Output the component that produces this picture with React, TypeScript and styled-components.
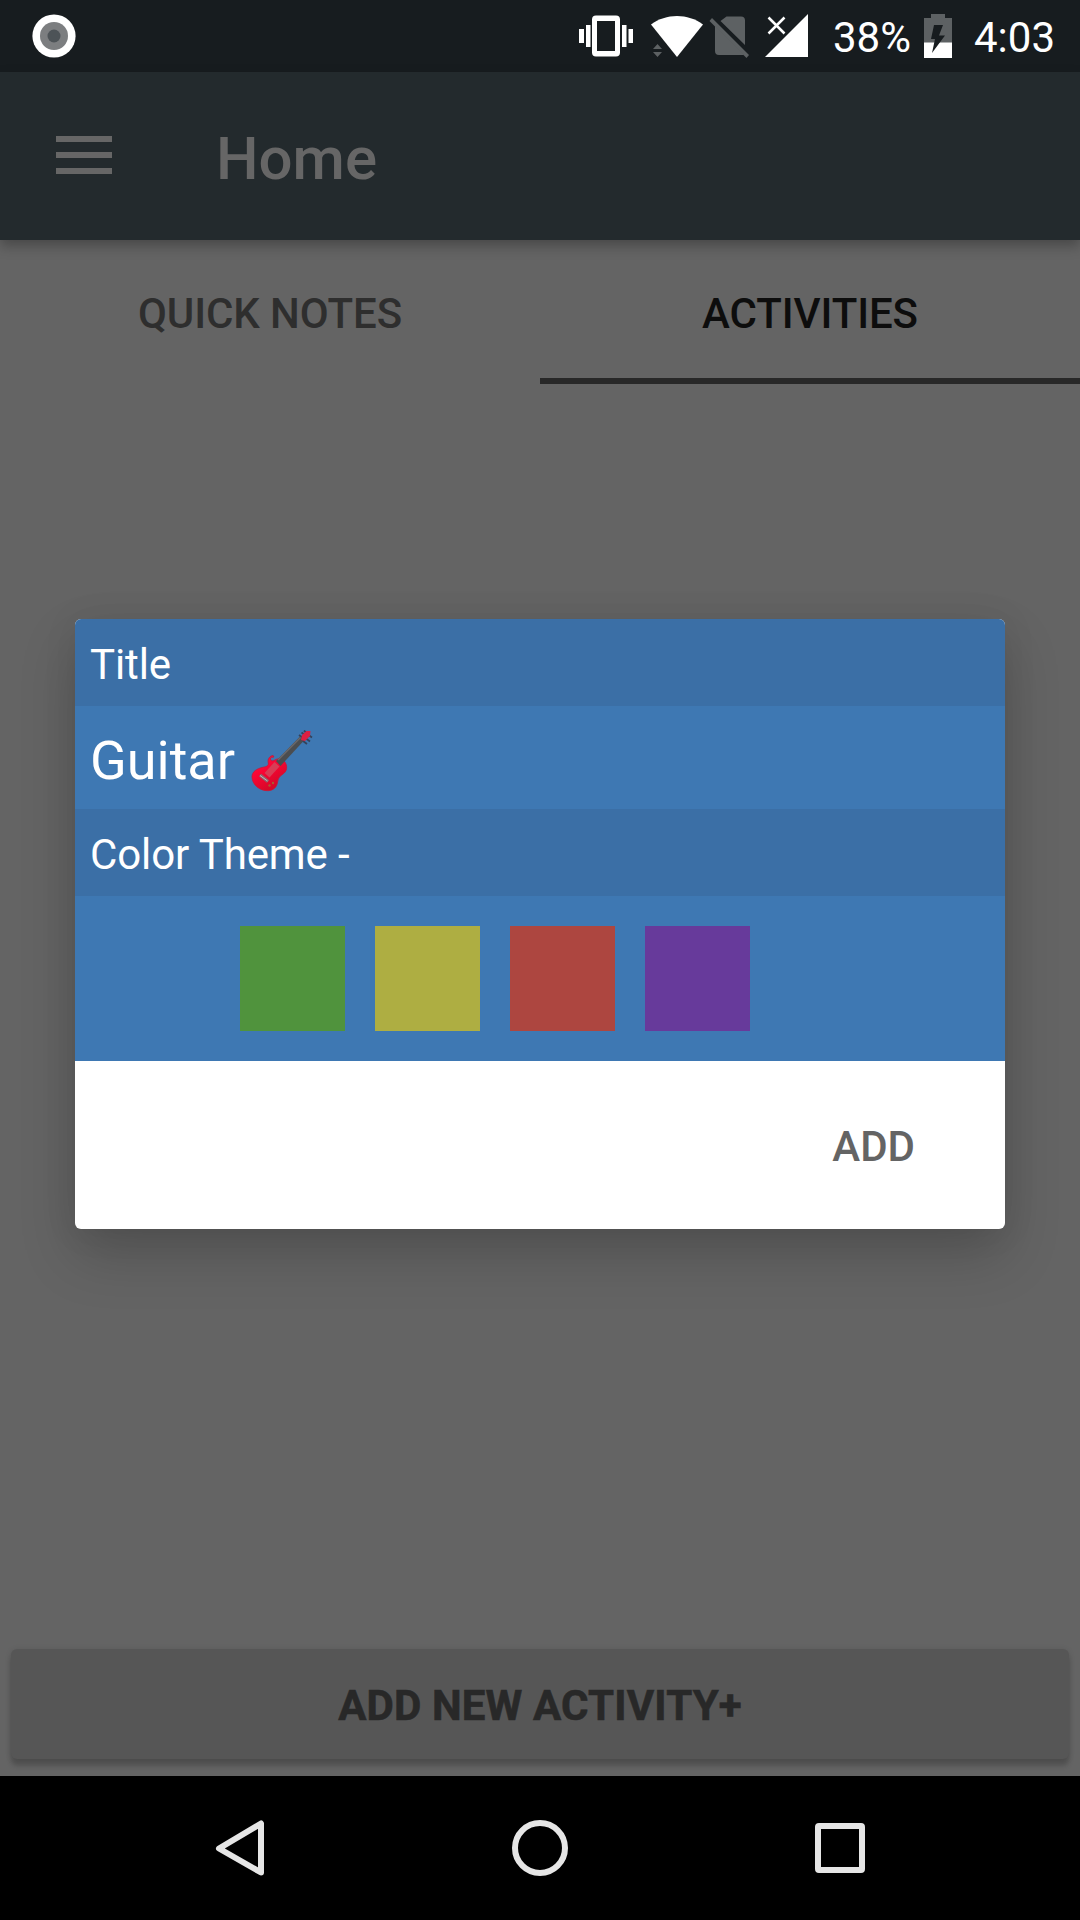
import React from "react";
import styled, { createGlobalStyle } from "styled-components";

const GlobalStyle = createGlobalStyle`
  * { box-sizing: border-box; }
  body { margin: 0; background: #646464; }
  button { border: 0; margin: 0; padding: 0; background: none; font: inherit; color: inherit; }
`;

const Screen = styled.div`
  position: relative;
  display: flex;
  flex-direction: column;
  width: 1080px;
  height: 1920px;
  overflow: hidden;
  background: #646464;
  font-family: Roboto, "Liberation Sans", sans-serif;
`;

const StatusBar = styled.header`
  display: flex;
  align-items: center;
  justify-content: space-between;
  height: 72px;
  padding: 0 25px 0 32px;
  background: #171c1f;
  color: #fff;
  font-size: 42px;
  line-height: 72px;
  z-index: 1;
`;

const StatusGroup = styled.div`
  display: flex;
  align-items: center;
`;

const Battery = styled.svg`
  display: block;
  margin: 0 22px 0 13px;
`;

const StatusText = styled.span`
  display: block;
  padding-top: 3px;
`;

const BatteryLevel = styled(StatusText)`
  margin-left: 23px;
`;

const AppBar = styled.div`
  display: flex;
  align-items: center;
  flex: none;
  height: 168px;
  padding-left: 56px;
  background: #232a2d;
  box-shadow: 0 6px 12px rgba(0, 0, 0, 0.28);
  z-index: 1;
`;

const MenuButton = styled.button`
  display: flex;
  flex-direction: column;
  gap: 10px;
  width: 56px;
  margin-bottom: 2px;
`;

const MenuLine = styled.span`
  height: 6px;
  background: #666;
`;

const PageTitle = styled.h1`
  margin: 6px 0 0 104px;
  color: #666;
  font-size: 60px;
  font-weight: 500;
  line-height: 72px;
`;

const Tabs = styled.nav`
  display: flex;
  flex: none;
  height: 144px;
`;

const Tab = styled.button<{ $active?: boolean }>`
  flex: 1;
  padding-top: 10px;
  border-bottom: 6px solid ${(p) => (p.$active ? "#282828" : "transparent")};
  color: ${(p) => (p.$active ? "#0d0d0d" : "#2e2e2e")};
  font-size: 42px;
  font-weight: 500;
  line-height: 48px;
  letter-spacing: -0.1px;
`;

const Content = styled.main`
  display: flex;
  flex: 1;
  flex-direction: column;
  justify-content: flex-end;
  padding: 0 11px 17px;
`;

const AddActivity = styled.button`
  height: 110px;
  padding-top: 3px;
  border-radius: 6px;
  background: #565656;
  box-shadow: 0 7px 5px rgba(0, 0, 0, 0.18), 0 1px 6px rgba(0, 0, 0, 0.12);
  color: #282828;
  font-size: 42px;
  font-weight: 700;
  letter-spacing: 0.15px;
  -webkit-text-stroke: 0.6px #282828;
`;

const NavBar = styled.footer`
  display: flex;
  align-items: center;
  justify-content: center;
  gap: 180px;
  flex: none;
  height: 144px;
  background: #000;
`;

const NavIcon = styled.svg`
  display: block;
  width: 120px;
  height: 80px;
  fill: none;
  stroke: #e6e6e6;
  stroke-width: 6;
  stroke-linejoin: round;
`;

const Dialog = styled.section`
  position: absolute;
  top: 619px;
  left: 75px;
  width: 930px;
  height: 610px;
  overflow: hidden;
  border-radius: 6px;
  background: #fff;
  box-shadow: 0 26px 56px rgba(0, 0, 0, 0.19), 0 2px 36px rgba(0, 0, 0, 0.07);
  color: #fff;
  z-index: 2;
`;

const Label = styled.div`
  height: 87px;
  padding: 4px 15px 0;
  background: #3b6fa6;
  font-size: 42px;
  line-height: 84px;
  letter-spacing: -0.1px;
`;

const TitleField = styled.div`
  display: flex;
  align-items: center;
  height: 103px;
  padding: 6px 15px 0;
  background: #3e78b3;
  font-size: 54px;
`;

const Guitar = styled.svg`
  display: block;
  width: 64px;
  height: 64px;
  margin: 2px 0 0 15px;
`;

const Palette = styled.div`
  display: flex;
  gap: 30px;
  height: 165px;
  padding: 30px;
  background: #3e78b3;
`;

const Swatch = styled.button<{ $color: string }>`
  width: 105px;
  height: 105px;
  background: ${(p) => p.$color};
`;

const Actions = styled.div`
  display: flex;
  align-items: center;
  justify-content: flex-end;
  height: 168px;
  padding: 2px 90px 0 0;
`;

const AddButton = styled.button`
  color: #646464;
  font-size: 42px;
  font-weight: 500;
`;

const swatches = ["#3e78b3", "#50933d", "#aeae42", "#ad4640", "#673a9b"];

const RecordIcon = () => (
  <svg width="44" height="44" viewBox="0 0 44 44">
    <circle cx="22" cy="22" r="21.6" fill="#fff" />
    <circle cx="22" cy="22" r="14" fill="#7c7e80" />
    <circle cx="22" cy="22" r="6.5" fill="#4d5357" />
  </svg>
);

const SignalIcons = () => (
  <svg width="240" height="72" viewBox="570 0 240 72">
    <g fill="#fff">
      <path d="M579 29h5v14h-5zM586 25h4.500v22h-4.500zM622 25h4.500v22h-4.500zM628.500 29h4.500v14h-4.500z" />
      <path fillRule="evenodd" d="M596 15.500h20a4 4 0 0 1 4 4v33a4 4 0 0 1-4 4h-20a4 4 0 0 1-4-4v-33a4 4 0 0 1 4-4zM597 21v30h18V21z" />
      <path d="M651 24.500C666 13 688 13 703 24.500L677 57z" />
      <path d="M808 14v43h-43z" />
    </g>
    <path d="M768.500 17.500l16 16m0-16l-16 16" stroke="#fff" strokeWidth="2.500" />
    <g fill="#5d6163">
      <path d="M653 49l4.500-5 4.500 5zM653 52h9l-4.500 5z" />
      <path d="M726.500 16.500H741a4 4 0 0 1 4 4V45L720.500 21zM715 25.500L744 54.500a4 4 0 0 1-3 .500h-22a4 4 0 0 1-4-4z" />
      <path d="M712 18l37 37-2.500 3L709.500 21z" />
    </g>
  </svg>
);

const BatteryIcon = () => (
  <Battery width="28" height="44" viewBox="0 0 28 44">
    <path d="M7 0h14v4h7v25H0V4h7z" fill="#5d6163" />
    <path d="M0 28.500h28V44H0z" fill="#fff" />
    <path d="M10 11h9l-4 10.500h6L8 39l3-14H7z" fill="#171c1f" />
  </Battery>
);

const GuitarIcon = () => (
  <Guitar viewBox="250 730 64 64">
    <defs>
      <linearGradient id="body" x1="0" y1="0" x2="0.600" y2="1">
        <stop offset="0" stopColor="#e9234d" />
        <stop offset="0.450" stopColor="#fb0535" />
        <stop offset="1" stopColor="#cf0926" />
      </linearGradient>
    </defs>
    <path d="M272.500 755.500c-3.500 1-5 4-4.200 7.500.5 2.500-1.300 3.500-5 4.200-6.500 1.300-11.300 4.500-11.300 9.500 0 8 8 14.300 16 14 6-.3 9-4 9.700-9 .5-4 2.300-5.700 6-8.200 4.500-3.500 3.600-10-.7-13.500-2-1.600-5.500-1.800-8.500.3-2 1.300-4.500.3-4-1.700.2-1.300 1.400-1.500 3-1.400.2-1.200 0-1.800-1-1.700z" fill="url(#body)" stroke="#c91635" strokeWidth="0.800" />
    <path d="M264.500 773l10-11 5 4.500-10 11z" fill="#d83d55" />
    <path d="M276 761l24-24.500 4 4L280.500 766z" fill="#4b4d50" />
    <path d="M278 760l23-23" stroke="#6a686b" strokeWidth="1.500" />
    <g stroke="#35435b" strokeWidth="1.800">
      <path d="M299 735l4 3M301.500 732.500l4 3M304 730.500l3 3M303 741l4 3M306 738.500l4 3M308.500 735l3.500 2.500" />
    </g>
    <path d="M301 740l1-5 4.500-4h4l-.5 5-5 5z" fill="#dc1f43" />
    <path d="M260 775l8 6.500" stroke="#8b6670" strokeWidth="3.500" />
    <path d="M260 775.500l7.500 5.500" stroke="#c6b5b6" strokeWidth="1" />
    <circle cx="269.500" cy="785.500" r="1.200" fill="#a85c31" />
    <circle cx="273" cy="783" r="1.200" fill="#a85c31" />
  </Guitar>
);

export default function App() {
  return (
    <>
      <GlobalStyle />
      <Screen>
        <StatusBar>
          <RecordIcon />
          <StatusGroup>
            <SignalIcons />
            <BatteryLevel>38%</BatteryLevel>
            <BatteryIcon />
            <StatusText>4:03</StatusText>
          </StatusGroup>
        </StatusBar>
        <AppBar>
          <MenuButton aria-label="Menu">
            <MenuLine />
            <MenuLine />
            <MenuLine />
          </MenuButton>
          <PageTitle>Home</PageTitle>
        </AppBar>
        <Tabs>
          <Tab>QUICK NOTES</Tab>
          <Tab $active>ACTIVITIES</Tab>
        </Tabs>
        <Content>
          <AddActivity>ADD NEW ACTIVITY+</AddActivity>
        </Content>
        <NavBar>
          <NavIcon viewBox="180 1808 120 80">
            <path d="M219 1848.500L261 1823.500v49z" />
          </NavIcon>
          <NavIcon viewBox="480 1808 120 80">
            <circle cx="540" cy="1848" r="25" />
          </NavIcon>
          <NavIcon viewBox="780 1808 120 80">
            <rect x="818" y="1826" width="44" height="44" rx="1" />
          </NavIcon>
        </NavBar>
        <Dialog role="dialog">
          <Label>Title</Label>
          <TitleField>
            Guitar
            <GuitarIcon />
          </TitleField>
          <Label>Color Theme -</Label>
          <Palette>
            {swatches.map((color) => (
              <Swatch key={color} $color={color} />
            ))}
          </Palette>
          <Actions>
            <AddButton>ADD</AddButton>
          </Actions>
        </Dialog>
      </Screen>
    </>
  );
}
